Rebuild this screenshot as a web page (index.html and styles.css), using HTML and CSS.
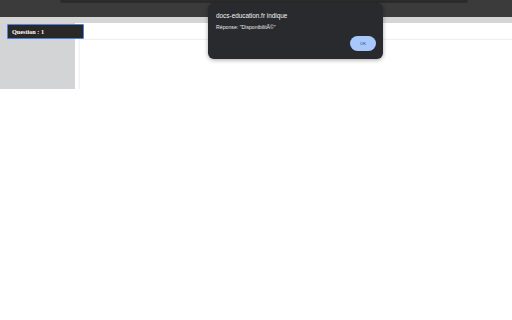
FILE: index.html
```html
<!DOCTYPE html>
<html lang="fr">
<head>
  <meta charset="UTF-8" />
  <title>Question</title>
  <link rel="stylesheet" href="styles.css">
</head>
<body>

  <div class="top-bar">
    <div class="top-strip"></div>
  </div>
  <div class="sub-bar"></div>

  <div class="main">
    <div class="sidebar"></div>
    <div class="content">
      <div class="question">Question : 1</div>
      <div class="panel"></div>
    </div>
  </div>

  <!-- alert() dialog -->
  <div class="dialog">
    <div class="dialog-title">docs-education.fr indique</div>
    <div class="dialog-text">Réponse: "DisponibilitÃ©"</div>
    <div class="dialog-actions">
      <button class="ok">OK</button>
    </div>
  </div>

</body>
</html>
```

FILE: styles.css
```css
html, body {
  margin: 0; padding: 0;
  background: #fff;
  font-family: 'Liberation Sans', Arial, sans-serif;
}

.top-bar {
  height: 17px;
  background: #3b3b3b;
  display: flex;
  justify-content: center;
}

.top-strip {
  width: 408px;
  height: 3px;
  background: #2b2b2b;
  border-radius: 0 0 4px 4px;
  margin-left: 16px;
}

.sub-bar {
  height: 6px;
  background: #d5d5d6;
}

.main {
  display: flex;
  height: 66px;
}

.sidebar {
  width: 75px;
  background: #d3d4d6;
}

.content {
  flex: 1;
  position: relative;
}

/* question tag sits over the sidebar edge */
.question {
  position: absolute;
  top: 1px;
  left: -68px;
  width: 71px;
  height: 13px;
  background: #2a2826;
  border: 1px solid #4f7fe6;
  border-radius: 1px;
  color: #fff;
  font-family: 'Liberation Serif', serif;
  font-weight: bold;
  font-size: 6.2px;
  line-height: 13px;
  padding-left: 4px;
}

.panel {
  margin: 16px 0 0 4px;
  height: 50px;
  border-top: 1px solid #f0f0f0;
  border-left: 1px solid #f0f0f0;
  box-shadow: 0 0 2px rgba(0,0,0,0.05);
}

.dialog {
  position: absolute;
  top: 3px;
  left: 208px;
  width: 175px;
  height: 56px;
  box-sizing: border-box;
  background: #292a2d;
  border-radius: 6px;
  box-shadow: 0 1px 4px rgba(0,0,0,0.35);
  padding: 9px 8px 0 8px;
  color: #e8eaed;
}

.dialog-title {
  font-size: 6.4px;
  line-height: 8px;
  color: #f1f3f4;
}

.dialog-text {
  margin-top: 4px;
  font-size: 5.2px;
  line-height: 7px;
  color: #e8eaed;
}

.dialog-actions {
  display: flex;
  justify-content: flex-end;
  margin-top: 5px;
}

.ok {
  width: 26px;
  height: 15px;
  margin-right: -1px;
  border: none;
  border-radius: 8px;
  background: #a8c7fa;
  color: #2b3b5c;
  font-family: 'Liberation Sans', Arial, sans-serif;
  font-size: 4px;
  padding: 0;
}
```
